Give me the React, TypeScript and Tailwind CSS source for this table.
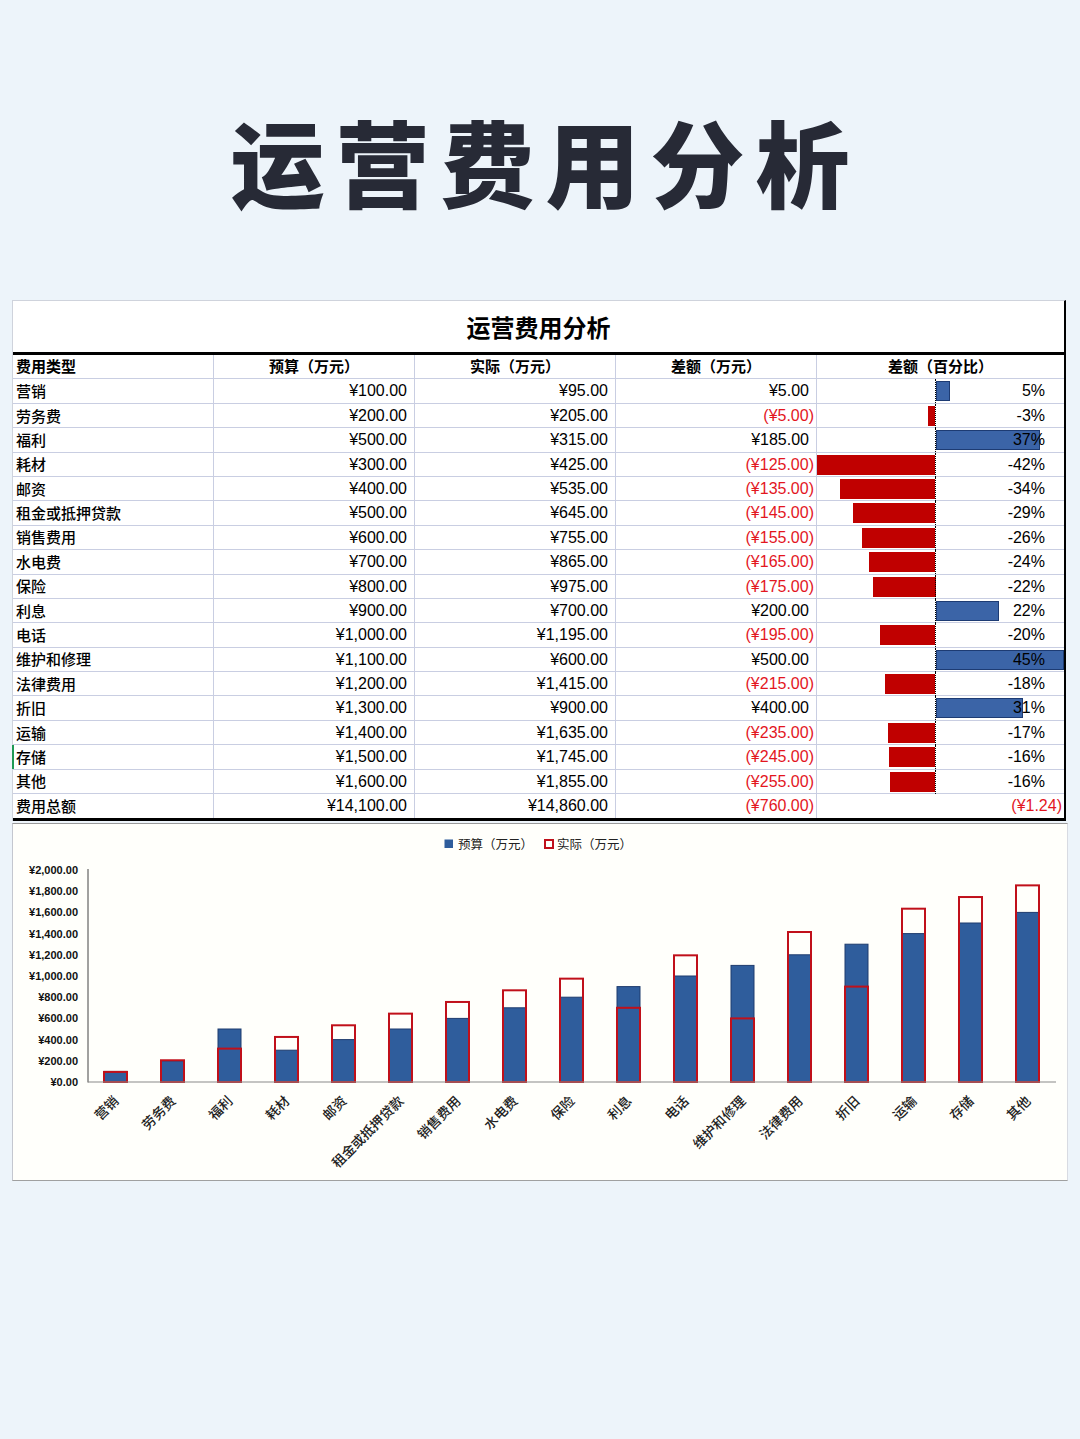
import React from "react";

type Row = [string, number, number];

const rows: Row[] = [
  ["营销", 100, 95],
  ["劳务费", 200, 205],
  ["福利", 500, 315],
  ["耗材", 300, 425],
  ["邮资", 400, 535],
  ["租金或抵押贷款", 500, 645],
  ["销售费用", 600, 755],
  ["水电费", 700, 865],
  ["保险", 800, 975],
  ["利息", 900, 700],
  ["电话", 1000, 1195],
  ["维护和修理", 1100, 600],
  ["法律费用", 1200, 1415],
  ["折旧", 1300, 900],
  ["运输", 1400, 1635],
  ["存储", 1500, 1745],
  ["其他", 1600, 1855],
];

const pctLabels = ["5%", "-3%", "37%", "-42%", "-34%", "-29%", "-26%", "-24%", "-22%", "22%", "-20%", "45%", "-18%", "31%", "-17%", "-16%", "-16%"];

function fmt(n: number): string {
  const s = Math.abs(n).toFixed(2);
  const [i, d] = s.split(".");
  const withCommas = i.replace(/\B(?=(\d{3})+(?!\d))/g, ",");
  return "¥" + withCommas + "." + d;
}

function Money({ v }: { v: number }) {
  if (v < 0) {
    return <span className="text-[#e3161e]">({fmt(v)})</span>;
  }
  return <span className="pr-[5px]">{fmt(v)}</span>;
}

const CJK = "font-['Noto_Sans_CJK_SC',sans-serif]";
const NUM = "font-['Liberation_Sans','Noto_Sans_CJK_SC',sans-serif]";

const PX_PER_PCT = 2.835;
const AXIS = 118.5;

function DataBar({ pct, label }: { pct: number; label: string }) {
  const w = Math.abs(pct) * PX_PER_PCT;
  const neg = pct < 0;
  return (
    <div className="relative flex items-center justify-end pr-[19px] h-full">
      {neg ? (
        <div className="absolute top-[2px] bottom-[2px] bg-[#c00000]" style={{ left: AXIS - w, width: w }} />
      ) : (
        <div className="absolute top-[2px] bottom-[2px] bg-[#3b64a7] border border-[#1d3b73]" style={{ left: AXIS, width: w }} />
      )}
      <div className="absolute top-0 bottom-0 left-[118px] border-l border-dotted border-black" />
      <span className="relative">{label}</span>
    </div>
  );
}

function Chart() {
  const cx = (i: number) => 115.5 + i * 57;
  const yOf = (v: number) => 1081 - v * 0.106;
  const ticks = [0, 200, 400, 600, 800, 1000, 1200, 1400, 1600, 1800, 2000];
  return (
    <svg width="1054" height="356" viewBox="13 823 1054 356" className="block">
      <rect x="444.5" y="838.5" width="8.5" height="8.5" fill="#2f5d9c" />
      <text x="458" y="847.5" fontSize="12.5" fill="#222" fontFamily="'Noto Sans CJK SC', sans-serif">预算（万元）</text>
      <rect x="545" y="839" width="8" height="8" fill="none" stroke="#c0101a" strokeWidth="2" />
      <text x="557" y="847.5" fontSize="12.5" fill="#222" fontFamily="'Noto Sans CJK SC', sans-serif">实际（万元）</text>

      {ticks.map((t) => (
        <text key={t} x="78" y={yOf(t) + 4} fontSize="11" fontWeight="700" textAnchor="end" fill="#111" fontFamily="'Liberation Sans', sans-serif">
          {fmt(t)}
        </text>
      ))}

      <line x1="88" y1="868" x2="88" y2="1081.5" stroke="#444" strokeWidth="1" />

      {rows.map((r, i) => (
        <g key={r[0]}>
          <rect x={cx(i) - 11.5} y={yOf(r[1])} width="23" height={r[1] * 0.106} fill="#2f5d9c" stroke="#1f3c6e" strokeWidth="1" />
          <rect x={cx(i) - 11.5} y={yOf(r[2])} width="23" height={r[2] * 0.106} fill="none" stroke="#c0101a" strokeWidth="2" />
        </g>
      ))}
      <line x1="88" y1="1081" x2="1056" y2="1081" stroke="#8a8a8a" strokeWidth="1.2" />

      {rows.map((r, i) => (
        <text
          key={"l" + r[0]}
          x={cx(i) + 4}
          y={1101}
          fontSize="13.5"
          fontWeight="500"
          textAnchor="end"
          fill="#222"
          fontFamily="'Noto Sans CJK SC', sans-serif"
          transform={`rotate(-45 ${cx(i) + 4} 1101)`}
        >
          {r[0]}
        </text>
      ))}
    </svg>
  );
}

export default function App() {
  const totalB = rows.reduce((s, r) => s + r[1], 0);
  const totalA = rows.reduce((s, r) => s + r[2], 0);
  const cell = "border-r border-[#c9cee2] h-full flex items-center";
  return (
    <div className="w-[1080px] h-[1439px] overflow-hidden bg-[#edf4fa]">
      <div className="h-[300px] flex justify-center pt-[113px]">
        <h1 className={`${CJK} font-black text-[94px] leading-[94px] tracking-[11px] pl-[11px] text-[#272a36]`}>运营费用分析</h1>
      </div>

      <div className="ml-[12px] w-[1056px]">
        <div className="w-[1054px] bg-white border-l border-t border-[#cfd3dc] border-r-2 border-r-black text-black">
          <div className={`h-[54px] flex items-center justify-center border-b-[3px] border-black ${CJK} font-bold text-[24px]`}>
            运营费用分析
          </div>
          <div className={`grid grid-cols-[201px_201px_201px_201px_1fr] h-[24.4px] border-b border-[#c9cee2] ${CJK} font-bold text-[15px]`}>
            <div className={`${cell} pl-[3px]`}>费用类型</div>
            <div className={`${cell} justify-center`}>预算（万元）</div>
            <div className={`${cell} justify-center`}>实际（万元）</div>
            <div className={`${cell} justify-center`}>差额（万元）</div>
            <div className="h-full flex items-center justify-center">差额（百分比）</div>
          </div>
          {rows.map((r, i) => {
            const diff = r[1] - r[2];
            const pct = (diff / r[1]) * 100;
            return (
              <div key={r[0]} className={`grid grid-cols-[201px_201px_201px_201px_1fr] h-[24.4px] border-b border-[#c9cee2] ${NUM} text-[16px]`}>
                <div className={`${cell} pl-[3px] ${CJK} font-medium text-[15px] relative`}>
                  {r[0] === "存储" && <div className="absolute left-[-1px] top-0 bottom-0 w-[2px] bg-[#1f9a55]" />}
                  {r[0]}
                </div>
                <div className={`${cell} justify-end pr-[2px]`}><Money v={r[1]} /></div>
                <div className={`${cell} justify-end pr-[2px]`}><Money v={r[2]} /></div>
                <div className={`${cell} justify-end pr-[2px]`}><Money v={diff} /></div>
                <DataBar pct={pct} label={pctLabels[i]} />
              </div>
            );
          })}
          <div className={`grid grid-cols-[201px_201px_201px_201px_1fr] h-[27.4px] border-b-[3px] border-black ${NUM} text-[16px]`}>
            <div className={`${cell} pl-[3px] ${CJK} font-medium text-[15px]`}>费用总额</div>
            <div className={`${cell} justify-end pr-[2px]`}><Money v={totalB} /></div>
            <div className={`${cell} justify-end pr-[2px]`}><Money v={totalA} /></div>
            <div className={`${cell} justify-end pr-[2px]`}><Money v={totalB - totalA} /></div>
            <div className="h-full flex items-center justify-end pr-[2px] text-[#e3161e]">(¥1.24)</div>
          </div>
        </div>
        <div className="mt-[2px] bg-[#fffffb] border-t border-[#9a9a9a] border-l border-l-[#c4c7cf] border-b border-b-[#a0a0a0] border-r border-r-[#d8dbe2]">
          <Chart />
        </div>
      </div>
    </div>
  );
}
